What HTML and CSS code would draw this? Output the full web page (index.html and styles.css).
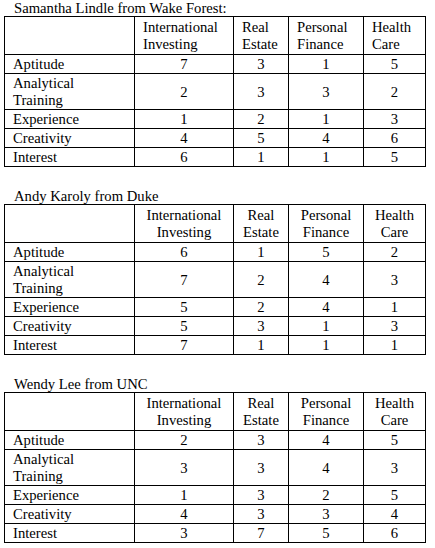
FILE: index.html
```html
<!DOCTYPE html>
<html lang="en">
<head>
<meta charset="utf-8">
<title>Candidate ratings</title>
<link rel="stylesheet" href="styles.css">
</head>
<body>
<main class="page">
  <section class="block">
    <p class="title">Samantha Lindle from Wake Forest:</p>
    <table class="grid grid--left-head">
      <colgroup><col class="c1"><col class="c2"><col class="c3"><col class="c4"><col class="c5"></colgroup>
      <tr class="head"><th></th><th>International Investing</th><th>Real Estate</th><th>Personal Finance</th><th>Health Care</th></tr>
      <tr><td>Aptitude</td><td>7</td><td>3</td><td>1</td><td>5</td></tr>
      <tr><td>Analytical Training</td><td>2</td><td>3</td><td>3</td><td>2</td></tr>
      <tr><td>Experience</td><td>1</td><td>2</td><td>1</td><td>3</td></tr>
      <tr><td>Creativity</td><td>4</td><td>5</td><td>4</td><td>6</td></tr>
      <tr><td>Interest</td><td>6</td><td>1</td><td>1</td><td>5</td></tr>
    </table>
  </section>
  <section class="block">
    <p class="title">Andy Karoly from Duke</p>
    <table class="grid">
      <colgroup><col class="c1"><col class="c2"><col class="c3"><col class="c4"><col class="c5"></colgroup>
      <tr class="head"><th></th><th>International Investing</th><th>Real Estate</th><th>Personal Finance</th><th>Health Care</th></tr>
      <tr><td>Aptitude</td><td>6</td><td>1</td><td>5</td><td>2</td></tr>
      <tr><td>Analytical Training</td><td>7</td><td>2</td><td>4</td><td>3</td></tr>
      <tr><td>Experience</td><td>5</td><td>2</td><td>4</td><td>1</td></tr>
      <tr><td>Creativity</td><td>5</td><td>3</td><td>1</td><td>3</td></tr>
      <tr><td>Interest</td><td>7</td><td>1</td><td>1</td><td>1</td></tr>
    </table>
  </section>
  <section class="block">
    <p class="title">Wendy Lee from UNC</p>
    <table class="grid">
      <colgroup><col class="c1"><col class="c2"><col class="c3"><col class="c4"><col class="c5"></colgroup>
      <tr class="head"><th></th><th>International Investing</th><th>Real Estate</th><th>Personal Finance</th><th>Health Care</th></tr>
      <tr><td>Aptitude</td><td>2</td><td>3</td><td>4</td><td>5</td></tr>
      <tr><td>Analytical Training</td><td>3</td><td>3</td><td>4</td><td>3</td></tr>
      <tr><td>Experience</td><td>1</td><td>3</td><td>2</td><td>5</td></tr>
      <tr><td>Creativity</td><td>4</td><td>3</td><td>3</td><td>4</td></tr>
      <tr><td>Interest</td><td>3</td><td>7</td><td>5</td><td>6</td></tr>
    </table>
  </section>
</main>
</body>
</html>
```
FILE: styles.css
```css
html, body {
  margin: 0;
  padding: 0;
  background: #ffffff;
}

body {
  font-family: "Liberation Serif", "Times New Roman", serif;
  font-size: 14.67px;
  color: #000000;
}

.page {
  padding: 0 0 0 4px;
}

.block + .block {
  margin-top: 21px;
}

.title {
  margin: 0;
  padding-left: 10px;
  line-height: 16px;
}

.grid {
  border-collapse: collapse;
  table-layout: fixed;
  width: 421px;
}

.c1 { width: 130px; }
.c2 { width: 99px; }
.c3 { width: 55px; }
.c4 { width: 75px; }
.c5 { width: 62px; }

.grid th,
.grid td {
  border: 1px solid #000000;
  padding: 1px 0 0;
  line-height: 17px;
  font-weight: normal;
  text-align: center;
  vertical-align: middle;
}

.grid td:first-child {
  text-align: left;
  padding-left: 8px;
  padding-right: 12px;
}

.grid .head th {
  padding-top: 2px;
  padding-bottom: 1px;
}

.grid--left-head .head th {
  text-align: left;
  padding-left: 8px;
}
```
